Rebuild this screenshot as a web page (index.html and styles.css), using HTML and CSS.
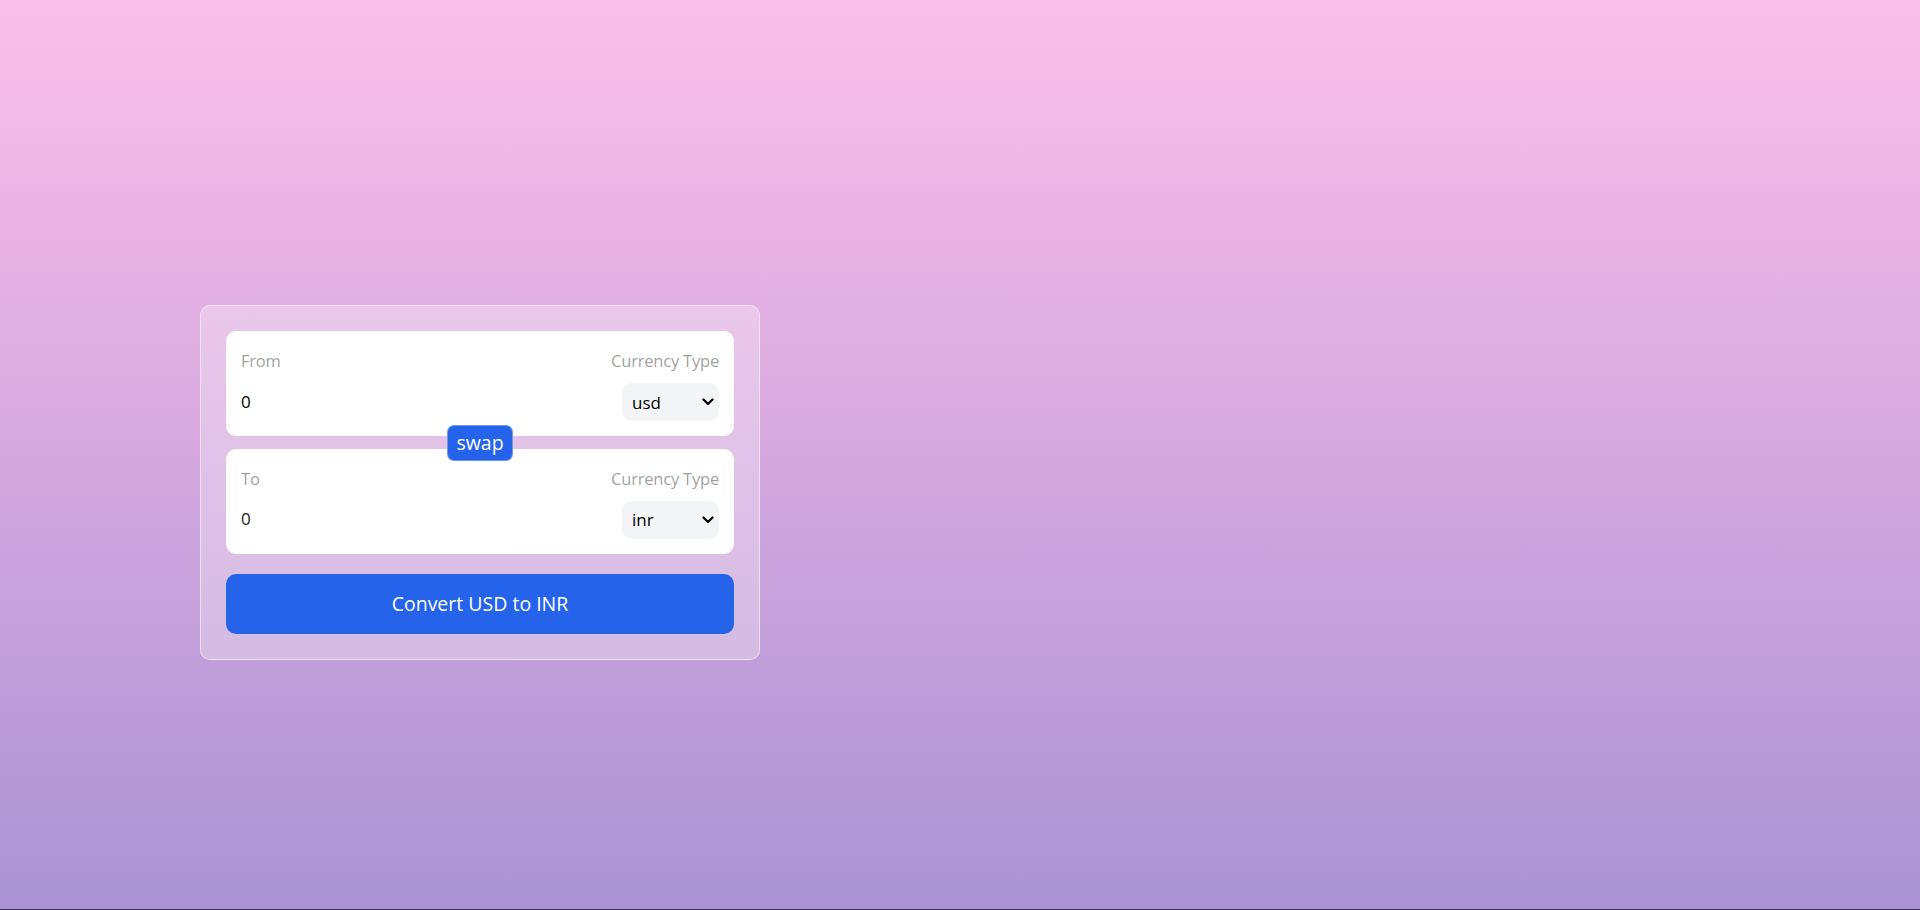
FILE: index.html
```html
<!DOCTYPE html>
<html lang="en">
<head>
<meta charset="UTF-8">
<title>Currency Converter</title>
<link rel="stylesheet" href="styles.css">
</head>
<body>
<main class="page">
  <section class="left">
    <div class="card">
      <form class="form">
        <div class="box">
          <div class="col">
            <label class="label" for="from">From</label>
            <input class="amount" id="from" type="number" value="0">
          </div>
          <div class="col col-right">
            <p class="label">Currency Type</p>
            <div class="select-wrap">
              <select class="select"><option>usd</option><option>inr</option></select>
              <svg class="chev" width="12" height="8" viewBox="0 0 12 8"><path d="M1.5 1.5 L6 6 L10.5 1.5" fill="none" stroke="#000" stroke-width="2.2" stroke-linecap="round" stroke-linejoin="round"/></svg>
            </div>
          </div>
        </div>
        <div class="swap-row">
          <button type="button" class="swap">swap</button>
        </div>
        <div class="box box-to">
          <div class="col">
            <label class="label" for="to">To</label>
            <input class="amount" id="to" type="number" value="0" disabled>
          </div>
          <div class="col col-right">
            <p class="label">Currency Type</p>
            <div class="select-wrap">
              <select class="select"><option>inr</option><option>usd</option></select>
              <svg class="chev" width="12" height="8" viewBox="0 0 12 8"><path d="M1.5 1.5 L6 6 L10.5 1.5" fill="none" stroke="#000" stroke-width="2.2" stroke-linecap="round" stroke-linejoin="round"/></svg>
            </div>
          </div>
        </div>
        <button type="submit" class="convert">Convert USD to INR</button>
      </form>
    </div>
  </section>
</main>
</body>
</html>
```
FILE: styles.css
```css
* { box-sizing: border-box; }
html, body { margin: 0; padding: 0; }
body {
  background: #3d3550;
  font-family: "Open Sans", "Noto Sans", sans-serif;
}
.page {
  height: 909px;
  background: linear-gradient(to bottom, #fbc0ea 0%, #d6a9df 48%, #a993d3 100%);
  display: flex;
}
.left {
  width: 50%;
  display: flex;
  justify-content: center;
  align-items: center;
  padding-top: 56px;
}
.card {
  width: 560px;
  border: 1px solid rgba(240, 235, 245, 0.75);
  border-radius: 10px;
  padding: 25px;
  background: rgba(255, 255, 255, 0.3);
}
.form { display: flex; flex-direction: column; margin: 0; }
.box {
  background: #fff;
  border-radius: 10px;
  padding: 15px;
  display: flex;
  margin-bottom: 5px;
}
.box-to { margin-top: 5px; margin-bottom: 20px; }
.col { width: 50%; display: flex; flex-direction: column; }
.col-right { align-items: flex-end; text-align: right; }
.label {
  color: rgba(0, 0, 0, 0.4);
  line-height: 25px;
  margin: 2px 0 8px 0;
  font-size: 16.5px;
  letter-spacing: -0.2px;
}
.amount {
  border: none;
  outline: none;
  background: transparent;
  font: inherit;
  font-size: 17px;
  color: #000;
  padding: 7.5px 0;
  line-height: 25px;
  height: 40px;
  width: 100%;
  -moz-appearance: textfield;
}
.amount::-webkit-inner-spin-button, .amount::-webkit-outer-spin-button { -webkit-appearance: none; margin: 0; }
.amount:disabled { color: #1a1a1a; }
.select-wrap { position: relative; margin-top: 2px; }
.select {
  appearance: none;
  -webkit-appearance: none;
  width: 97px;
  height: 38px;
  border: none;
  outline: none;
  border-radius: 10px;
  background: #f3f4f6;
  font: inherit;
  font-size: 17px;
  color: #000;
  padding: 0 0 0 10px;
}
.chev { position: absolute; right: 5px; top: 15px; pointer-events: none; }
.swap-row {
  height: 2.5px;
  display: flex;
  justify-content: center;
  align-items: center;
}
.swap {
  height: 36px;
  padding: 0 8px;
  border: 1px solid rgba(255, 255, 255, 0.35);
  border-radius: 7px;
  background: #2563eb;
  color: #fff;
  font: inherit;
  font-size: 19.5px;
  line-height: 1;
  position: relative;
  z-index: 1;
}
.convert {
  width: 100%;
  height: 60px;
  border: none;
  border-radius: 10px;
  background: #2563eb;
  color: #fff;
  font: inherit;
  font-size: 19.5px;
}
```
